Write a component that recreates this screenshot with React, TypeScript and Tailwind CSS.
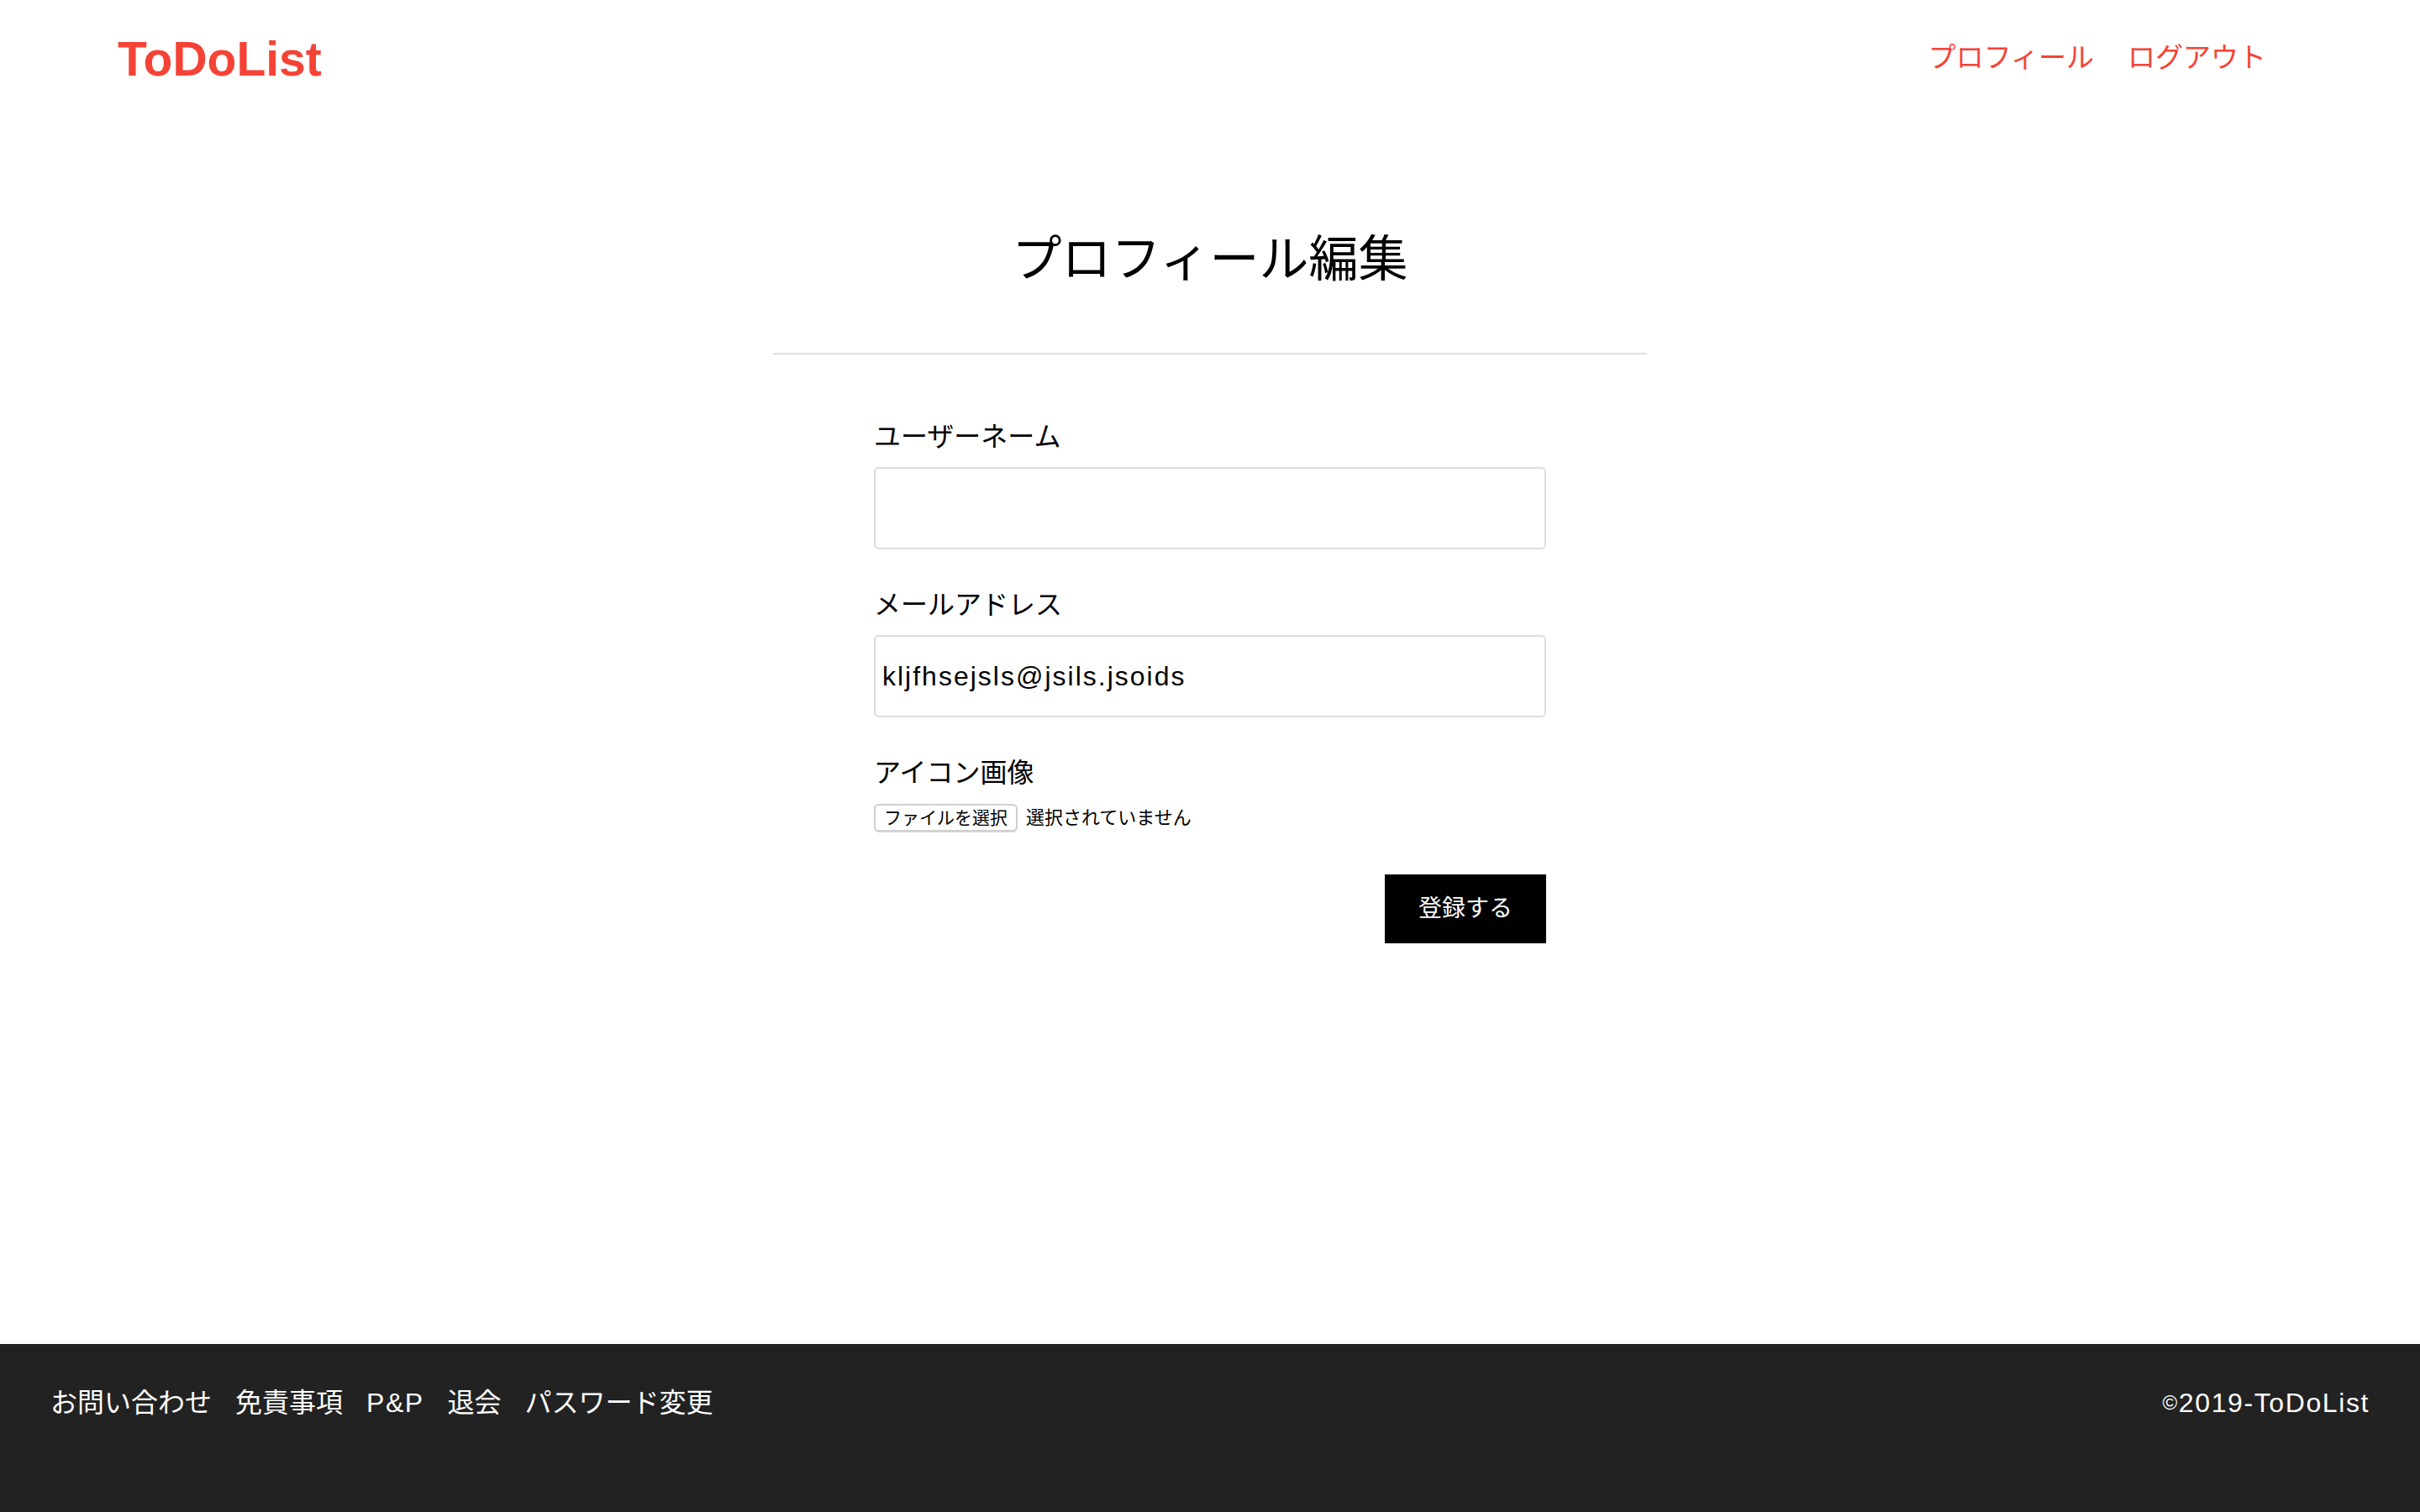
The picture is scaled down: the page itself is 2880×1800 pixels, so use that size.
import React, { useState } from 'react';

const FONT = "font-['Liberation_Sans','Noto_Sans_CJK_JP',sans-serif]";

const Header: React.FC = () => (
  <header className="h-[136px] flex items-center justify-between pl-[140px] pr-[183px]">
    <a href="#" className="text-[57px] font-bold leading-none text-[#f44336] mt-1">ToDoList</a>
    <nav className="flex gap-[40px] text-[33px] leading-none text-[#f44336]">
      <a href="#">プロフィール</a>
      <a href="#">ログアウト</a>
    </nav>
  </header>
);

const Footer: React.FC = () => (
  <footer className="h-[200px] bg-[#222222] text-white text-[32px] leading-[48px] pt-[46px] px-[60px] flex justify-between items-start">
    <ul className="flex gap-[28px]">
      <li><a href="#">お問い合わせ</a></li>
      <li><a href="#">免責事項</a></li>
      <li><a href="#" className="tracking-[1.5px]">P&amp;P</a></li>
      <li><a href="#">退会</a></li>
      <li><a href="#">パスワード変更</a></li>
    </ul>
    <p className="tracking-[1.6px]">
      <span className="text-[24px] align-[3px]">©</span>2019-ToDoList
    </p>
  </footer>
);

export default function App() {
  const [username, setUsername] = useState('');
  const [email, setEmail] = useState('kljfhsejsls@jsils.jsoids');

  return (
    <div className={`min-h-screen flex flex-col bg-white text-black ${FONT}`}>
      <Header />

      <main className="flex-1 flex flex-col items-center">
        <h1 className="mt-[144px] text-[59px] leading-none font-normal">プロフィール編集</h1>
        <div className="mt-[81px] w-[1040px] border-t-2 border-[#e0e0e0]" />

        <form className="w-[800px] mt-[74px] flex flex-col" onSubmit={e => e.preventDefault()}>
          <label htmlFor="username" className="text-[32px] leading-[48px] mb-3">ユーザーネーム</label>
          <input
            id="username"
            type="text"
            value={username}
            onChange={e => setUsername(e.target.value)}
            className="h-[98px] border-2 border-[#dddddd] rounded-[6px] px-2 text-[32px] tracking-[2px] outline-none"
          />

          <label htmlFor="email" className="mt-[42px] text-[32px] leading-[48px] mb-3">メールアドレス</label>
          <input
            id="email"
            type="email"
            value={email}
            onChange={e => setEmail(e.target.value)}
            className="h-[98px] border-2 border-[#dddddd] rounded-[6px] px-2 text-[32px] tracking-[2px] outline-none"
          />

          <label className="mt-[42px] text-[32px] leading-[48px]">アイコン画像</label>
          <div className="mt-[13px] flex items-center gap-[10px]">
            <button
              type="button"
              className="w-[171px] h-[33px] border-2 border-[#cfcfcf] rounded-[6px] bg-white shadow-[0_1px_1px_rgba(0,0,0,0.15)] text-[21px] leading-none"
            >
              ファイルを選択
            </button>
            <span className="text-[22px] leading-none">選択されていません</span>
          </div>

          <div className="mt-[51px] flex justify-end">
            <button type="submit" className="w-[192px] h-[82px] bg-black text-white text-[28px] leading-none">
              登録する
            </button>
          </div>
        </form>
      </main>

      <Footer />
    </div>
  );
}
